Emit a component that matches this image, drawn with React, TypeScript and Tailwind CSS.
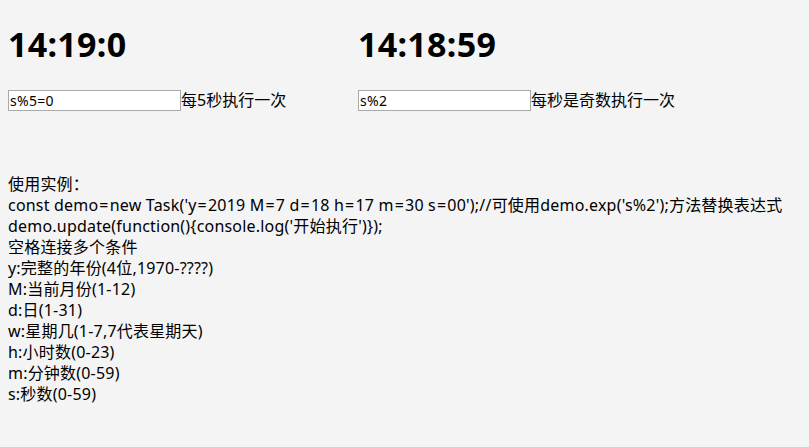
import React from 'react';

const LINES = [
  '使用实例：',
  "const demo=new Task('y=2019 M=7 d=18 h=17 m=30 s=00');//可使用demo.exp('s%2');方法替换表达式",
  "demo.update(function(){console.log('开始执行')});",
  '空格连接多个条件',
  'y:完整的年份(4位,1970-????)',
  'M:当前月份(1-12)',
  'd:日(1-31)',
  'w:星期几(1-7,7代表星期天)',
  'h:小时数(0-23)',
  'm:分钟数(0-59)',
  's:秒数(0-59)',
];

const TASKS = [
  { time: '14:19:0', expr: 's%5=0', label: '每5秒执行一次' },
  { time: '14:18:59', expr: 's%2', label: '每秒是奇数执行一次' },
];

// wider "=" like the original font
function Code({ text }: { text: string }) {
  const parts = text.split('=');
  return (
    <>
      {parts.map((p, i) => (
        <React.Fragment key={i}>
          {i > 0 && <span className="px-[1px]">=</span>}
          {p}
        </React.Fragment>
      ))}
    </>
  );
}

export default function App() {
  return (
    <div className="min-h-screen bg-[#f4f4f4] px-2 text-black font-['Noto_Sans','Noto_Sans_CJK_SC',sans-serif] text-base">
      <div className="flex">
        {TASKS.map((t) => (
          <div key={t.time} className="w-[350px]">
            <h1 className="pt-[23px] text-[34px] font-bold leading-[42px] tracking-[0.3px]">{t.time}</h1>
            <div className="mt-[25px] flex items-center h-[21px]">
              <input
                readOnly
                value={t.expr}
                className="w-[173px] h-[21px] border border-[#a9a9a9] bg-white px-[1px] text-[14px] tracking-[0.3px] outline-none"
              />
              <span className="leading-[21px]">{t.label}</span>
            </div>
          </div>
        ))}
      </div>
      <div className="mt-[63px] leading-[21px] tracking-[0.2px]">
        {LINES.map((l) => (
          <div key={l}>
            <Code text={l} />
          </div>
        ))}
      </div>
    </div>
  );
}
